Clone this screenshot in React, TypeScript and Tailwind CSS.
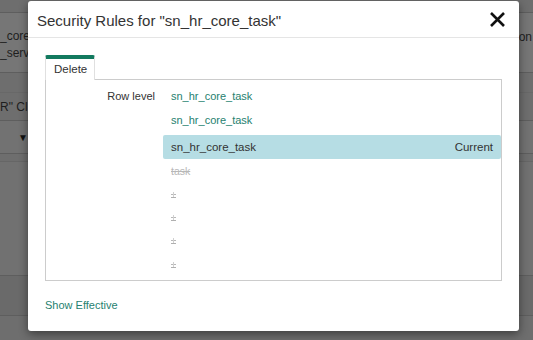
import React from "react";

const font = { fontFamily: '"Liberation Sans", Arial, sans-serif' };

function Strike() {
  return (
    <span className="relative inline-block w-[5px] h-[6px] border-b border-[#b0b0b0] mt-[1px]">
      <span className="absolute left-0 right-0 top-[2px] border-t border-[#b8b8b8]" />
      <span className="absolute left-[2px] top-0 h-[5px] border-l border-[#d0d0d0]" />
    </span>
  );
}

export default function App() {
  return (
    <div className="relative w-[533px] h-[340px] overflow-hidden bg-[#6e6e6e]" style={font}>
      {/* background page (dimmed) */}
      <div className="flex flex-col text-[12px] text-[#1e1e1e]">
        <div className="h-[13px] border-b border-[#5e5e5e]" />
        <div className="h-[60px] border-b border-[#5e5e5e] bg-[#767676] flex justify-between">
          <div className="flex flex-col pt-[15px] leading-[17px]">
            <span>_core</span>
            <span>_servi</span>
          </div>
          <div className="pt-[15px] pr-[1px]">on</div>
        </div>
        <div className="h-[20px] border-b border-[#686868]" />
        <div className="h-[28px] border-b border-[#5e5e5e] flex items-center text-[12px]">
          <span>R" Cl</span>
        </div>
        <div className="h-[33px] border-b border-[#5e5e5e] flex items-center bg-[#727272]">
          <span className="ml-[18px] text-[10px] text-[#111]">▼</span>
        </div>
        <div className="h-[8px] border-b border-[#666]" />
        <div className="h-[114px] border-b border-[#5e5e5e] bg-[#717171]" />
        <div className="h-[40px] border-b border-[#5e5e5e] bg-[#6a6a6a]" />
      </div>

      {/* modal */}
      <div className="absolute left-[28px] top-[1px] w-[491px] h-[330px] bg-white rounded-[3px] shadow-[0_3px_10px_rgba(0,0,0,0.45)] flex flex-col">
        <div className="h-[37px] border-b border-[#e5e5e5] flex items-center justify-between pl-[9px] pr-[13px]">
          <span className="text-[15px] text-[#333] leading-none pt-[2px]">Security Rules for "sn_hr_core_task"</span>
          <svg width="17" height="17" viewBox="0 0 17 17" className="mt-[1px]">
            <path d="M2 2 L15 15 M15 2 L2 15" stroke="#111" strokeWidth="2.6" strokeLinecap="butt" />
          </svg>
        </div>
        <div className="flex flex-col pl-[17px] pr-[17px] pt-[17px]">
          <div className="flex">
            <div className="w-[50px] h-[25px] border-l border-r border-[#e0e0e0] border-t-[4px] border-t-[#127a5f] rounded-t-[2px] flex items-center pl-[8px] text-[11.5px] text-[#333]">
              Delete
            </div>
            <div className="flex-1 border-b border-[#cccccc]" />
          </div>
          <div className="h-[201px] border border-t-0 border-[#cccccc] flex pt-[4px]">
            <div className="w-[117px] text-right pr-[8px] pt-[4px] text-[11px] text-[#333] leading-[16px]">Row level</div>
            <div className="flex-1 flex flex-col text-[11px] leading-[16px]">
              <div className="h-[24px] flex items-center pl-[8px] text-[#26816f]">sn_hr_core_task</div>
              <div className="h-[24px] flex items-center pl-[8px] text-[#26816f]">sn_hr_core_task</div>
              <div className="h-[24px] mt-[3px] flex items-center justify-between pl-[8px] pr-[8px] bg-[#b6dde4] rounded-[2px] text-[#333] text-[11.5px]">
                <span>sn_hr_core_task</span>
                <span>Current</span>
              </div>
              <div className="h-[24px] flex items-center pl-[8px] text-[#b8b8b8] line-through text-[10.5px]">task</div>
              <div className="h-[23px] flex items-center pl-[8px]"><Strike /></div>
              <div className="h-[23px] flex items-center pl-[8px]"><Strike /></div>
              <div className="h-[23px] flex items-center pl-[8px]"><Strike /></div>
              <div className="h-[24px] flex items-center pl-[8px]"><Strike /></div>
            </div>
          </div>
          <div className="pt-[16px] text-[11px] text-[#26816f] leading-[16px]">Show Effective</div>
        </div>
      </div>
    </div>
  );
}
